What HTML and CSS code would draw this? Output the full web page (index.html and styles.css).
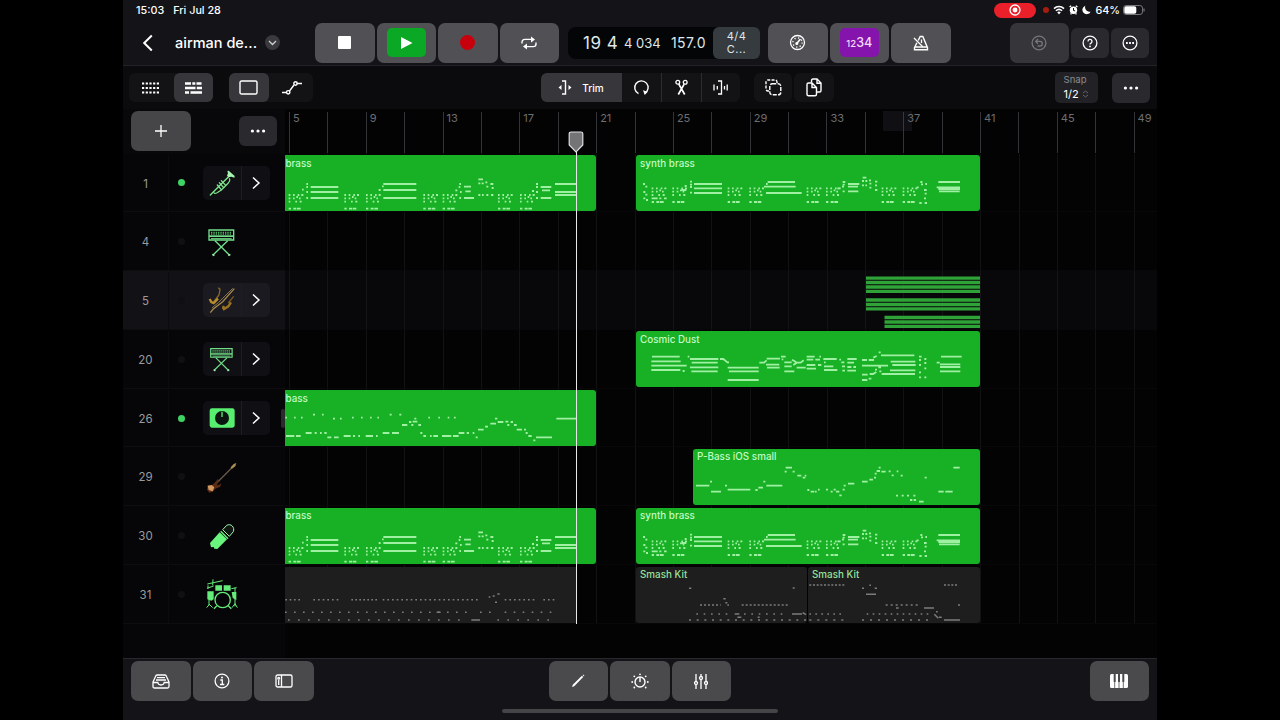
FILE: index.html
```html
<!DOCTYPE html>
<html lang="en">
  <head>
    <title>airman demo</title>
    <meta charset="UTF-8" />
    <link rel="stylesheet" href="styles.css">
  </head>
  <body>
    <svg class="defs">
      <symbol id="keyboard" viewBox="0 0 90 90">
        <path d="M6 9h74v30H6z" fill="none" stroke="#72df88" stroke-width="4" />
        <path d="M6 25h74v5H6z" fill="#72df88" />
        <path d="M12 35h62" stroke="#72df88" stroke-width="3" />
        <path d="M12 16h62M12 21h62" stroke="#4fb263" stroke-width="4" stroke-dasharray="4 3" />
        <path d="M24 41l43 43M62 41L18 84" fill="none" stroke="#72df88" stroke-width="4" />
        <path d="M16 82l6 4M70 82l-6 4" stroke="#a7f0b4" stroke-width="5" />
      </symbol>
      <symbol id="chevron" viewBox="0 0 12 16">
        <path d="M3 2.5l6 5.5-6 5.5" fill="none" stroke="#fff" stroke-width="1.5" />
      </symbol>
      <symbol id="dots" viewBox="0 0 16 6">
        <circle cx="2.4" cy="3" r="1.6" /><circle cx="8" cy="3" r="1.6" /><circle cx="13.6" cy="3" r="1.6" />
      </symbol>
      <g id="cluster">
        <path d="M0 0h5m8 0h5m9 0h5m6 0h6M0 10h5m8 0h5m13 0h5M0 20h5m15 0h5m8 0h6M23 6h5M0 41h7m7 0h9m2 0h11" />
      </g>
      <g id="brass-notes">
        <use href="#cluster" x="26" y="270" /><use href="#cluster" x="193" y="270" />
        <use href="#cluster" x="258" y="270" /><use href="#cluster" x="430" y="270" />
        <use href="#cluster" x="488" y="270" /><use href="#cluster" x="654" y="270" />
        <use href="#cluster" x="720" y="270" />
        <path d="M92 246h83M92 261h83M92 279h83M310 237h99M310 255h99M310 279h99" />
        <path d="M66 254h5M79 237h5M79 246h5M79 261h5M79 279h5M296 255h6M306 244h5" />
        <path d="M526 256h6M538 237h5M536 246h5M540 261h5M538 279h5M552 245h21M556 259h16M552 279h30" />
        <path d="M595 223h14M595 235h6m4 0h6M616 232h6M619 245h6M631 237h9M635 249h6M595 270h6m5 0h5M619 270h6M633 270h7" />
        <path d="M756 258h6M768 237h6M768 246h6M768 261h6M768 279h6M782 246h32M786 256h24M782 279h32M825 237h63M825 261h63M825 270h63" />
      </g>
      <g id="synth-notes">
        <path d="M69 237h6M76 245h6M70 261h6M76 269h6M70 280h6M78 285h6" />
        <use href="#cluster" x="95" y="250" /><use href="#cluster" x="157" y="250" />
        <use href="#cluster" x="323" y="250" /><use href="#cluster" x="388" y="250" />
        <use href="#cluster" x="560" y="250" /><use href="#cluster" x="618" y="250" />
        <use href="#cluster" x="785" y="250" /><use href="#cluster" x="848" y="250" />
        <path d="M95 280h18m5 0h6m8 0h8M184 255h15M194 243h6M210 230h6M210 239h6M210 246h6M210 263h6" />
        <path d="M222 237h84M222 250h84M222 264h84M443 231h82M432 245h95M438 264h107M438 237h5" />
        <path d="M652 250h6M668 231h8M668 239h6M666 245h6M668 259h6M684 237h34M684 245h30M684 259h31" />
        <path d="M728 218h11M726 228h6m4 0h6M726 241h6m4 0h5M747 226h6M748 236h6M748 248h6M765 230h7M765 241h6M765 255h7" />
        <path d="M890 247h6M901 231h6M903 238h6M916 237h5M912 255h8M914 266h6M912 280h6M898 294h7M914 294h7" />
        <path d="M955 231h65M950 247h70M955 252h65M957 259h62" />
      </g>
    </svg>

    <div class="app">
      <header class="status-bar">
        <span class="clock">15:03</span>
        <span class="date">Fri Jul 28</span>
        <div class="status-icons">
          <span class="rec-pill">
            <svg width="12" height="12" viewBox="0 0 12 12"><circle cx="6" cy="6" r="5" fill="none" stroke="#fff" stroke-width="1.3" /><circle cx="6" cy="6" r="2.4" fill="#fff" /></svg>
          </span>
          <span class="mic-dot"></span>
          <svg class="wifi" width="12" height="10" viewBox="0 0 12 10"><path d="M1 3.6a7.2 7.2 0 0 1 10 0M2.9 5.8a4.6 4.6 0 0 1 6.2 0" fill="none" stroke="#fff" stroke-width="1.5" /><path d="M4.2 7.3a2.7 2.7 0 0 1 3.6 0L6 9.4z" fill="#fff" /></svg>
          <svg class="alarm" width="9" height="10" viewBox="0 0 9 10"><circle cx="4.5" cy="5.2" r="3.7" fill="#fff" /><path d="M.6 2L2.2.8M8.4 2L6.8.8M1.6 9.4l.8-1M7.4 9.4l-.8-1" stroke="#fff" stroke-width="1.4" /><path d="M4.5 3v2.5l1.6.4" fill="none" stroke="#131318" /></svg>
          <svg class="moon" width="9" height="10" viewBox="0 0 9 10"><path d="M3.3.8a4.3 4.3 0 1 0 5.3 5.9A4.6 4.6 0 0 1 3.3.8z" fill="#fff" /></svg>
          <span class="charge">64%</span>
          <svg width="22" height="10" viewBox="0 0 22 10"><rect x=".5" y=".5" width="19" height="9" rx="2.6" fill="none" stroke="#77777b" /><rect x="1.3" y="1.3" width="12" height="7.4" rx="1.8" fill="#fff" /><path d="M21 3.4v3.2" stroke="#77777b" stroke-width="1.2" /></svg>
        </div>
      </header>

      <div class="control-bar">
        <svg class="back" width="12" height="18" viewBox="0 0 12 18"><path d="M9.8 1.5L2.2 9l7.6 7.5" fill="none" stroke="#fff" stroke-width="2" /></svg>
        <div class="project-name">airman de...</div>
        <div class="name-menu"><svg width="9" height="6" viewBox="0 0 9 6"><path d="M1 1l3.5 3.5L8 1" fill="none" stroke="#d0d0d3" stroke-width="1.3" /></svg></div>

        <div class="button-row transport">
          <div class="key"><span class="stop"></span></div>
          <div class="key"><span class="play"><svg width="13" height="14" viewBox="0 0 13 14"><path d="M1 1l11.5 6L1 13z" fill="#fff" /></svg></span></div>
          <div class="key"><span class="record"></span></div>
          <div class="key">
            <svg width="18" height="14" viewBox="0 0 18 14"><path d="M2 7.5V6a2.6 2.6 0 0 1 2.6-2.6H12M16 6.5V8a2.6 2.6 0 0 1-2.6 2.6H6" fill="none" stroke="#fff" stroke-width="1.4" /><path d="M11 .4l4 3-4 3zM7 7.6l-4 3 4 3z" fill="#fff" /></svg>
          </div>
        </div>

        <div class="lcd">
          <span class="position">19 4</span>
          <span class="ticks">4 034</span>
          <span class="tempo">157.0</span>
          <div class="signature"><span>4/4</span><span>C...</span></div>
        </div>

        <div class="button-row modes">
          <div class="key">
            <svg width="17" height="17" viewBox="0 0 17 17"><circle cx="8.5" cy="8.5" r="7" fill="none" stroke="#fff" stroke-width="1.3" /><circle cx="8.5" cy="8.5" r="4.6" fill="none" stroke="#fff" stroke-width="1.3" stroke-dasharray="1.2 2.4" /><path d="M7.8 9.5l3.6-4.5" stroke="#fff" stroke-width="1.5" /><circle cx="7.8" cy="9.5" r="1.5" fill="#fff" /></svg>
          </div>
          <div class="key"><span class="count-in"><small>12</small>34</span></div>
          <div class="key">
            <svg width="16" height="16" viewBox="0 0 16 16"><path d="M5.2 5.5l2-4h2.6l4.7 11.2v2H1.5v-2l2.4-5M1.8 12h12.4" fill="none" stroke="#fff" stroke-width="1.4" /><path d="M1 3l9 9M8.5 4.5V8" fill="none" stroke="#fff" stroke-width="1.3" /></svg>
          </div>
        </div>

        <div class="button-row right-keys">
          <div class="key disabled">
            <svg width="16" height="16" viewBox="0 0 16 16"><g fill="none" stroke="#77777b" stroke-width="1.3"><circle cx="8" cy="8" r="6.9" /><path d="M5 6.4h4a2.3 2.3 0 0 1 0 4.6H6.6M7 4L4.7 6.4 7 8.8" /></g></svg>
          </div>
          <div class="small-key">
            <svg width="16" height="16" viewBox="0 0 16 16"><circle cx="8" cy="8" r="6.9" fill="none" stroke="#fff" stroke-width="1.3" /><path d="M6 6.4a2 2 0 1 1 3 1.7c-.8.4-1 .7-1 1.5" fill="none" stroke="#fff" stroke-width="1.3" /><circle cx="8" cy="11.4" r=".9" fill="#fff" /></svg>
          </div>
          <div class="small-key">
            <svg width="16" height="16" viewBox="0 0 16 16"><circle cx="8" cy="8" r="6.9" fill="none" stroke="#fff" stroke-width="1.3" /><path d="M4 8h1.8M7.1 8h1.8M10.2 8H12" stroke="#fff" stroke-width="1.8" /></svg>
          </div>
        </div>
      </div>

      <div class="tool-bar">
        <div class="segment view-switch">
          <div class="seg"><svg width="17" height="12" viewBox="0 0 17 12"><path d="M0 1.5h17M0 6h17M0 10.5h17" stroke="#fff" stroke-width="2.2" stroke-dasharray="2.2 1.5" /></svg></div>
          <div class="seg on"><svg width="17" height="12" viewBox="0 0 17 12"><path d="M0 1.5h6M7.3 1.5h3M11.5 1.5h5M0 6h10.5M11.8 6H17M0 10.5h4M5.5 10.5H17" stroke="#fff" stroke-width="2.6" /></svg></div>
        </div>
        <div class="segment edit-switch">
          <div class="seg on"><svg width="19" height="15" viewBox="0 0 19 15"><rect x="1" y="1" width="17" height="13" rx="1.6" fill="none" stroke="#fff" stroke-width="1.4" /></svg></div>
          <div class="seg"><svg width="20" height="14" viewBox="0 0 20 14"><g fill="none" stroke="#fff" stroke-width="1.4"><path d="M0 11.5h4.5M7.5 10L12 4M14.5 2.500H20" /><circle cx="6.2" cy="11.3" r="1.7" /><circle cx="13.5" cy="2.5" r="1.7" /></g></svg></div>
        </div>

        <div class="segment tools">
          <div class="seg on trim">
            <svg width="14" height="15" viewBox="0 0 14 15"><path d="M4 1h3.5v13H4" fill="none" stroke="#fff" stroke-width="1.4" /><path d="M3.5 5v5L.5 7.5zM10.5 5v5l3-2.5z" fill="#fff" /></svg>
            <span>Trim</span>
          </div>
          <div class="seg"><svg width="17" height="17" viewBox="0 0 17 17"><path d="M5.5 14.6a6.700 6.700 0 1 1 6.200-.2" fill="none" stroke="#fff" stroke-width="1.4" /><path d="M10 11.3l4.700 1.500-3 3.300z" fill="#fff" /></svg></div>
          <div class="seg"><svg width="13" height="17" viewBox="0 0 13 17"><g fill="none" stroke="#fff" stroke-width="1.3"><circle cx="2.8" cy="3.3" r="1.9" /><circle cx="10.2" cy="3.3" r="1.9" /><path d="M3.8 5.2l5.900 10.300M9.200 5.200L3.300 15.500" stroke-width="1.7" /></g></svg></div>
          <div class="seg"><svg width="15" height="15" viewBox="0 0 15 15"><g fill="none" stroke="#fff" stroke-width="1.3"><path d="M5 1h3.500v13H5M1 4.500v6M4.300 6v3.500M11.500 6v3.500M14.200 4.500v6" /></g></svg></div>
        </div>
        <div class="tool copy"><svg width="17" height="17" viewBox="0 0 17 17"><rect x="4.8" y="4.8" width="11" height="11" rx="2.5" fill="none" stroke="#fff" stroke-width="1.4" stroke-dasharray="4 1.3" /><path d="M4 12H3a2 2 0 0 1-2-2V3a2 2 0 0 1 2-2h7a2 2 0 0 1 2 2v1" fill="none" stroke="#fff" stroke-width="1.4" stroke-dasharray="3 1.3" /></svg></div>
        <div class="tool"><svg width="16" height="19" viewBox="0 0 16 19"><g fill="none" stroke="#fff" stroke-width="1.4"><path d="M5.5 4.500V2.700C5.500 1.700 6 1 7 1h4l4 4v7.500c0 1-.5 1.500-1.500 1.500H11M11 1v4.300h4" /><path d="M2.500 5H6l4.500 4.500v6.700c0 1-.6 1.500-1.500 1.500H2.500c-1 0-1.500-.6-1.500-1.500V6.500C1 5.500 1.500 5 2.500 5zM6 5v4.500h4.500" /></g></svg></div>

        <div class="snap">
          <span class="snap-label">Snap</span>
          <span class="snap-value">1/2 <svg width="7" height="8" viewBox="0 0 7 8"><path d="M1 3l2.500-2L6 3M1 5l2.500 2L6 5" fill="none" stroke="#66666a" /></svg></span>
        </div>
        <div class="small-key"><svg class="dots" width="16" height="6"><use href="#dots" /></svg></div>
      </div>

      <main class="workspace">
        <aside class="tracks">
          <div class="tracks-head">
            <div class="key"><svg width="12" height="12" viewBox="0 0 12 12"><path d="M6 0v12M0 6h12" stroke="#fff" stroke-width="1.3" /></svg></div>
            <div class="small-key"><svg class="dots" width="16" height="6"><use href="#dots" /></svg></div>
          </div>

          <div class="track">
            <span class="num">1</span><span class="led lit"></span>
            <div class="instrument stack">
              <span class="icon"><svg width="30" height="30" viewBox="0 0 90 90"><g fill="none" stroke="#7fe88d" stroke-linecap="round"><path d="M10 81l8-8M18 73l52-52" stroke-width="4" /><path d="M20 71q0 7 9 4l14-9 21-21q7-9 3-13" stroke-width="3.5" /><path d="M31 51l12 14M37 44l13 15M43 38l13 14" stroke-width="4" /></g><path d="M61 9l4-1 18 16-1 5-9-3-8 2-5-5 3-7z" fill="#a9f2b0" /></svg></span>
              <span class="open"><svg width="12" height="16"><use href="#chevron" /></svg></span>
            </div>
          </div>
          <div class="track">
            <span class="num">4</span><span class="led"></span>
            <div class="instrument"><span class="icon"><svg width="30" height="30"><use href="#keyboard" /></svg></span></div>
          </div>
          <div class="track selected">
            <span class="num">5</span><span class="led"></span>
            <div class="instrument stack">
              <span class="icon"><svg width="30" height="30" viewBox="0 0 90 90"><g fill="none"><path d="M34 8l5 5-3 17-16 21" stroke="#8a6a26" stroke-width="4" /><path d="M8 42l5 9 7 3 13-13" stroke="#b98d2e" stroke-width="7" /><path d="M82 11L47 50 18 73l-8 10" stroke="#a5894e" stroke-width="4" /><path d="M77 10L35 52 15 69" stroke="#88764d" stroke-width="3" /><path d="M80 34L64 54" stroke="#7d5c1d" stroke-width="4" /><path d="M72 52l-8 12-16 10M50 62l-2 10" stroke="#9c7324" stroke-width="7" /></g></svg></span>
              <span class="open"><svg width="12" height="16"><use href="#chevron" /></svg></span>
            </div>
          </div>
          <div class="track">
            <span class="num">20</span><span class="led"></span>
            <div class="instrument stack">
              <span class="icon"><svg width="26" height="26"><use href="#keyboard" /></svg></span>
              <span class="open"><svg width="12" height="16"><use href="#chevron" /></svg></span>
            </div>
          </div>
          <div class="track">
            <span class="num">26</span><span class="led lit"></span>
            <div class="instrument stack">
              <span class="icon"><svg width="30" height="30" viewBox="0 0 90 90"><rect x="8" y="16" width="75" height="58" rx="7" fill="#58ee70" /><circle cx="45" cy="45" r="21" fill="#0d1510" /><path d="M45 26v16" stroke="#58ee70" stroke-width="4" /></svg></span>
              <span class="open"><svg width="12" height="16"><use href="#chevron" /></svg></span>
            </div>
            <span class="grip"></span>
          </div>
          <div class="track">
            <span class="num">29</span><span class="led"></span>
            <div class="instrument"><span class="icon"><svg width="32" height="32" viewBox="0 0 96 96"><path d="M21 77L82 16" stroke="#68594b" stroke-width="4" /><path d="M74 19l9-10 8-3-3 10-11 8z" fill="#a88b55" /><path d="M5 73l11 1 12-11 8-10 2 8-6 9 5 3 10-6-5 11-14 5-7 9-11 3-7-9z" fill="#5a2b12" /><path d="M5 74l12-2 8 7-5 12-12-4z" fill="#d49a63" /></svg></span></div>
          </div>
          <div class="track">
            <span class="num">30</span><span class="led"></span>
            <div class="instrument"><span class="icon"><svg width="30" height="30" viewBox="0 0 90 90"><path d="M9 66l29-32 22 21-29 29-9-1-2-5-8 1z" fill="#69f47e" /><path d="M41 31l22 22" stroke="#69f47e" stroke-width="4" /><path d="M47 26l12-13c13-7 25 6 20 19L67 46z" fill="#101712" stroke="#a4f5af" stroke-width="3" /></svg></span></div>
          </div>
          <div class="track">
            <span class="num">31</span><span class="led"></span>
            <div class="instrument"><span class="icon"><svg width="32" height="32" viewBox="0 0 96 96"><g stroke="#64ec79" fill="none"><path d="M4 18l46-10M6 22v10M3 31l20-7M21 4l-1 18M76 32l16-3M87 29v56M9 47v35M2 89l8-10 10 10M78 89l9-12 7 12" stroke-width="3" /><circle cx="50" cy="66" r="23" stroke-width="4" /><path d="M32 84l-8 8M67 84l9 8" stroke-width="4" /></g><path d="M4 40h19v24l-7 4-12-4zM28 22h20v16H28zM53 22h21v16H53zM77 42h14v24l-11-6z" fill="#64ec79" /></svg></span></div>
          </div>
        </aside>

        <section class="timeline">
          <div class="ruler">
            <span>5</span><span></span><span>9</span><span></span><span>13</span><span></span>
            <span>17</span><span></span><span>21</span><span></span><span>25</span><span></span>
            <span>29</span><span></span><span>33</span><span></span><span>37</span><span></span>
            <span>41</span><span></span><span>45</span><span></span><span>49</span>
            <i class="loop-range"></i>
          </div>

          <div class="lanes">
            <div class="lane">
              <div class="region early">brass<svg viewBox="15 150 933 168"><use href="#brass-notes" /></svg></div>
              <div class="region late">synth brass<svg viewBox="48 150 1032 168"><use href="#synth-notes" /></svg></div>
            </div>
            <div class="lane"></div>
            <div class="lane selected">
              <svg class="held-notes" width="114" height="53" viewBox="0 0 114 53">
                <path d="M0 2.200h114M0 6.500h114M0 11h114M0 15.300h114M0 24h114M0 28.500h114M0 32.800h114M18.500 41.500h95.500M18.500 46h95.500M18.500 50.300h95.500" stroke="#2fa338" stroke-width="3.300" />
              </svg>
            </div>
            <div class="lane">
              <div class="region late">Cosmic Dust<svg viewBox="18 184 1032 168">
                <path d="M66 261h83M64 275h88M64 288h106M64 301h87M158 304h6M173 261h5M180 268h85M185 279h78M180 293h85M184 305h79M270 268h10l6 5 6 5h5" />
                <path d="M293 294h93M297 305h89M293 331h93M388 279h14l8-7M410 267h40M408 285h40M411 294h38M453 261h14M455 269h5M463 278h22M486 270l8 5 7 5M490 286l10-7h12l9-7M463 290h22M463 305h30M500 294h27" />
                <path d="M530 261h24M568 261h5M530 270h20m6 0h14M530 286h26m8 0h10M530 297h28M580 268h40M582 278h5M582 290h28M582 301h40M628 270h5M634 278h9M636 290h9M637 303h8M652 268h28M652 279h20M652 292h12m6 0h8M652 303h26" />
                <path d="M696 271h15m5 0h16M730 264l10-5M746 248h6M753 257h100M696 288h78M782 276h74M787 286h70M780 302h76M745 293h8M735 300h6M748 305h6M696 315h17m6 -2h10l10-6M755 313h100M696 331h16M716 327h8" />
                <path d="M867 261h8M867 271h6M883 268h6M867 286h6M883 280h6M883 296h6M867 308h6M867 323h6M883 323h6M933 261h62M920 279h9M930 284h61M930 292h61M930 305h61" />
              </svg></div>
            </div>
            <div class="lane">
              <div class="region early">bass<svg viewBox="15 16 933 168">
                <path d="M16 99h5M42 99h5M63 99h5M99 90h6M126 90h5M159 102h6M180 102h5M216 99h5M243 99h5M270 99h5M292 99h5M329 90h6M358 90h6M445 99h5M475 99h5M503 99h5M522 99h5" />
                <path d="M18 154h25m5 0h14M77 145h18M104 145h6M120 145h5M133 145h7M142 158h12M162 158h14M191 154h21M219 154h6M235 154h5M257 154h22M288 154h5M308 145h20m8 0h21M366 121h16M387 112h7M398 111h14M403 102h6M394 121h6M415 121h8M421 145h6M430 154h8M450 154h5m5 0h14M486 154h28m5 0h17M536 145h17M560 145h7M578 145h5M587 158h6M594 135h17M615 126h9M631 117h17M645 102h7M653 112h17M676 111h9M682 121h6M692 112h7M702 121h8M710 135h16M732 135h6M737 145h6M745 154h10M760 167h6M768 158h48M829 102h61" />
              </svg></div>
            </div>
            <div class="lane">
              <div class="region pbass">P-Bass iOS small<svg viewBox="219 13 861 168">
                <path d="M228 123h40M270 111h6M273 141h30M315 123h6M323 135h68M406 136h7M415 129h14M430 111h6M439 123h48M497 69h19M494 81h6M518 81h6M532 93h12M548 99h8M554 93h5M562 136h6M572 141h10M584 141h6M594 135h5M618 135h6M632 141h6M641 135h6M648 141h10M658 152h7M668 135h6M671 123h6M684 117h19M726 111h17M748 105h11M762 99h6M764 87h6M770 79h10M776 69h6M784 81h13M806 80h6M815 92h6M830 80h5M842 93h6M914 99h6M1000 69h19" />
                <path d="M828 153h6M845 153h6M861 153h6M880 153h6M870 166h7M881 166h7M897 171h14M955 141h16m5 0h22" />
              </svg></div>
            </div>
            <div class="lane">
              <div class="region early">brass<svg viewBox="15 150 933 168"><use href="#brass-notes" /></svg></div>
              <div class="region late">synth brass<svg viewBox="48 150 1032 168"><use href="#synth-notes" /></svg></div>
            </div>
            <div class="lane">
              <div class="region muted drums"><svg viewBox="15 200 876 168">
                <path d="M16 298h45" stroke-dasharray="5 8" /><path d="M100 298h80" stroke-dasharray="5 9" /><path d="M214 298h80" stroke-dasharray="5 7" /><path d="M308 298h290" stroke-dasharray="5 9" /><path d="M674 298h94M790 298h40" stroke-dasharray="5 9" />
                <path d="M15 336h562M600 336h38M674 336h156" stroke-dasharray="5 22" /><path d="M24 359h540M652 359h180" stroke-dasharray="5 25" />
                <path d="M626 290h5M638 287h6M652 281h7M645 306h6M470 336h12M574 359h26" />
              </svg></div>
              <div class="region muted kit-one">Smash Kit<svg viewBox="48 366 513 168">
                <path d="M207 430h7M518 429h6M310 461h7M316 473h6M322 480h5M344 507h14M352 517h12M516 507h30M548 503l10 6M413 517h6" />
                <path d="M240 480h62M365 480h140" stroke-dasharray="6 6" /><path d="M229 507h105M372 507h130" stroke-dasharray="5 17" /><path d="M207 525h354" stroke-dasharray="6 17" />
              </svg></div>
              <div class="region muted kit-two">Smash Kit<svg viewBox="564 366 516 168">
                <path d="M568 420h108M972 420h40" stroke-dasharray="6 5" />
                <path d="M726 430h6M748 421h5M764 430h7M738 448h30M828 489h8M912 489h30M948 500h5M943 508l12 12M1014 480h6M972 525h48M957 517h8" />
                <path d="M797 480h104" stroke-dasharray="6 9" /><path d="M568 507h107M740 507h190" stroke-dasharray="5 13" /><path d="M568 525h108M726 525h204" stroke-dasharray="6 18" />
              </svg></div>
            </div>
          </div>
          <div class="playhead"><svg width="16" height="23" viewBox="0 0 16 23"><path d="M3 1h10a1.800 1.800 0 0 1 1.800 1.800V14L8 21 1.200 14V2.800A1.800 1.800 0 0 1 3 1z" fill="#747476" stroke="#dedee0" stroke-width="1.2" /></svg></div>
        </section>
      </main>

      <footer class="bottom-bar">
        <div class="button-row">
          <div class="key"><svg width="18" height="15" viewBox="0 0 18 15"><g fill="none" stroke="#fff" stroke-width="1.3"><path d="M1 8l2.500-5.500C3.800 1.500 4.300 1 5 1h8c.7 0 1.200.5 1.500 1.500L17 8v4.500c0 1-.5 1.500-1.500 1.500h-13C1.500 14 1 13.500 1 12.500zM1 8.500h4.800c.3 2 1.500 2.500 3.200 2.500s2.900-.5 3.200-2.500H17M5 3.700h8M4 6h10" /></g></svg></div>
          <div class="key"><svg width="16" height="16" viewBox="0 0 16 16"><circle cx="8" cy="8" r="6.9" fill="none" stroke="#fff" stroke-width="1.3" /><path d="M6.3 7h2v4.300M6 11.500h4.300" fill="none" stroke="#fff" stroke-width="1.3" /><circle cx="8" cy="4.5" r="1" fill="#fff" /></svg></div>
          <div class="key"><svg width="18" height="14" viewBox="0 0 18 14"><g fill="none" stroke="#fff" stroke-width="1.3"><rect x="1" y="1" width="16" height="12" rx="1.6" /><path d="M6.5 1v12M3.700 6v5" /><circle cx="3.7" cy="4.3" r=".9" /></g></svg></div>
        </div>
        <div class="button-row editors">
          <div class="key"><svg width="14" height="14" viewBox="0 0 14 14"><path d="M1 13l.8-2.200L10.900 1.800l1.300 1.300L3.200 12.200zM11.600 1.100l.6-.5 1.200 1.200-.5.600z" fill="#fff" /></svg></div>
          <div class="key"><svg width="18" height="16" viewBox="0 0 18 16"><circle cx="9" cy="9" r="5" fill="none" stroke="#fff" stroke-width="1.4" /><path d="M9 4v5" stroke="#fff" stroke-width="1.4" /><g fill="#fff"><circle cx="9" cy="1.3" r=".9" /><circle cx="3.3" cy="3.3" r=".9" /><circle cx="14.7" cy="3.3" r=".9" /><circle cx="1.2" cy="9" r=".9" /><circle cx="16.8" cy="9" r=".9" /><circle cx="3.3" cy="14.5" r=".9" /><circle cx="14.7" cy="14.5" r=".9" /></g></svg></div>
          <div class="key"><svg width="14" height="15" viewBox="0 0 14 15"><g fill="none" stroke="#fff" stroke-width="1.3"><path d="M2 0v7.500M2 10.500V15M7 0v2.500M7 5.500V15M12 0v7.500M12 10.500V15" /><circle cx="2" cy="9" r="1.5" /><circle cx="7" cy="4" r="1.5" /><circle cx="12" cy="9" r="1.5" /></g></svg></div>
        </div>
        <div class="key piano"><svg width="18" height="14" viewBox="0 0 18 14"><rect width="18" height="14" rx="1.5" fill="#fff" /><path d="M4.7 0v8M9 0v8M13.300 0v8" stroke="#4a4a4d" stroke-width="2" /><path d="M4.7 8v6M9 8v6M13.300 8v6" stroke="#4a4a4d" stroke-width=".8" /></svg></div>
        <div class="home-indicator"></div>
      </footer>
    </div>
  </body>
</html>
```

FILE: styles.css
```css
* {
  box-sizing: border-box;
}

body {
  margin: 0;
  background: #000;
  color: #fff;
  font-family: Inter, "Liberation Sans", sans-serif;
}

svg {
  display: block;
  flex: none;
}

.defs {
  position: absolute;
  width: 0;
  height: 0;
}

.app {
  width: 1034px;
  height: 720px;
  margin: 0 auto 0 123px;
  display: flex;
  flex-direction: column;
  overflow: hidden;
  background: #131318;
}

/* status bar */

.status-bar {
  height: 20px;
  display: flex;
  align-items: center;
  padding: 0 12px 0 13px;
  font-size: 10.8px;
  font-weight: 500;
}

.date {
  margin-left: 9px;
}

.status-icons {
  margin-left: auto;
  display: flex;
  align-items: center;
}

.rec-pill {
  width: 42px;
  height: 15px;
  border-radius: 8px;
  background: #e9202a;
  display: flex;
  align-items: center;
  justify-content: center;
}

.mic-dot {
  width: 6px;
  height: 6px;
  margin: 0 4px 0 7px;
  border-radius: 50%;
  background: #a51d10;
}

.alarm {
  margin: 0 4px;
}

.charge {
  margin: 0 3px 0 4px;
}

/* transport */

.control-bar {
  height: 46px;
  display: flex;
  align-items: center;
  padding: 0 7px 0 19px;
  border-bottom: 1px solid #232327;
}

.project-name {
  width: 82px;
  margin-left: 21px;
  font-size: 14.5px;
  font-weight: 500;
  white-space: nowrap;
}

.name-menu {
  width: 15px;
  height: 15px;
  margin-left: 8px;
  border-radius: 50%;
  background: #3a3a3e;
  display: flex;
  align-items: center;
  justify-content: center;
}

.button-row {
  display: flex;
  align-items: center;
  gap: 2px;
}

.key {
  width: 59.5px;
  height: 40px;
  flex: none;
  border-radius: 7px;
  background: #515155;
  display: flex;
  align-items: center;
  justify-content: center;
}

.small-key {
  width: 38px;
  height: 30px;
  flex: none;
  border-radius: 6px;
  background: #29292e;
  display: flex;
  align-items: center;
  justify-content: center;
}

.disabled {
  background: #35353a;
}

.transport {
  margin-left: 35px;
}

.stop {
  width: 13px;
  height: 13px;
  border-radius: 1px;
  background: #fff;
}

.play {
  width: 39px;
  height: 29px;
  border-radius: 5px;
  background: #0aa824;
  display: flex;
  align-items: center;
  justify-content: center;
}

.record {
  width: 15px;
  height: 15px;
  border-radius: 50%;
  background: #c8000e;
}

.lcd {
  width: 192px;
  height: 32px;
  margin-left: 9px;
  padding-left: 15px;
  border-radius: 8px;
  background: #030507;
  color: #dfe8ea;
  display: flex;
  align-items: center;
  white-space: nowrap;
}

.position {
  width: 41px;
  font-size: 17px;
  letter-spacing: 0.5px;
}

.ticks {
  width: 47px;
  font-size: 13px;
}

.tempo {
  width: 42px;
  font-size: 14px;
  letter-spacing: 0.4px;
}

.signature {
  width: 47px;
  height: 32px;
  border-radius: 6px;
  background: #353b3f;
  display: flex;
  flex-direction: column;
  align-items: center;
  justify-content: center;
  font-size: 11px;
  line-height: 13px;
  letter-spacing: 0.5px;
}

.modes {
  margin-left: 8px;
}

.count-in {
  width: 39px;
  height: 29px;
  border-radius: 5px;
  background: #8514ad;
  color: #f3dcfa;
  text-align: center;
  font-size: 12.5px;
  font-weight: 500;
  line-height: 29px;
}

.count-in small {
  font-size: 9.5px;
}

.right-keys {
  margin-left: auto;
  padding-right: 1px;
}

/* tools */

.tool-bar {
  height: 43px;
  display: flex;
  align-items: center;
  padding: 0 7.5px 0 6px;
  background: #0b0b0d;
}

.segment {
  display: flex;
  border-radius: 6px;
  background: #131316;
}

.view-switch {
  gap: 3px;
  padding-left: 2px;
}

.edit-switch {
  gap: 4px;
  margin-left: 16px;
  padding-right: 1px;
}

.seg,
.tool {
  width: 39.5px;
  height: 29px;
  display: flex;
  align-items: center;
  justify-content: center;
}

.on {
  border-radius: 6px;
  background: #37373b;
}

.tools {
  margin-left: 227.5px;
}

.tools .seg + .seg + .seg {
  border-left: 1px solid #2c2c30;
}

.tools .trim {
  width: 81px;
  gap: 10px;
  border-radius: 6px 0 0 6px;
  font-size: 10px;
  font-weight: 500;
}

.tool {
  border-radius: 6px;
  background: #131316;
}

.copy {
  width: 38px;
  margin: 0 2px 0 14px;
}

.snap {
  width: 43px;
  height: 31px;
  margin: 0 14px 0 auto;
  padding: 1px 0 0 9px;
  border-radius: 5px;
  background: #222226;
  font-size: 9.6px;
  line-height: 14px;
}

.snap-label {
  display: block;
  color: #8b8b8f;
}

.snap-value {
  display: flex;
  align-items: center;
  gap: 3px;
  font-size: 11px;
  white-space: nowrap;
}

.dots {
  fill: #fff;
}

/* workspace */

.workspace {
  height: 549px;
  display: flex;
  background: #030304;
}

.tracks {
  width: 162px;
  flex: none;
  background: #060609;
}

.tracks-head {
  height: 44.5px;
  padding: 0 8px;
  display: flex;
  align-items: center;
  justify-content: space-between;
  background: #08080b;
}

.tracks-head .key {
  background: #464649;
}

.track {
  position: relative;
  height: 58.8px;
  padding-top: 1px;
  display: flex;
  align-items: center;
  border-bottom: 1px solid #0d0d10;
}

.track.selected {
  background: #111116;
}

.num {
  width: 46px;
  height: 100%;
  border-right: 1px solid #0c0c0f;
  color: #9a9a9d;
  font-size: 11.5px;
  line-height: 58px;
  text-align: center;
}

.led {
  width: 7px;
  height: 7px;
  margin-left: 9px;
  border-radius: 50%;
  background: #101013;
}

.lit {
  background: #3ed363;
}

.instrument {
  width: 67px;
  height: 34px;
  margin-left: 17.5px;
  border-radius: 5px;
  display: flex;
}

.stack {
  background: #101014;
}

.selected .stack {
  background: #1a1a20;
}

.icon {
  width: 38px;
  display: flex;
  align-items: center;
  justify-content: center;
}

.open {
  width: 29px;
  border-left: 1px solid #1d1d22;
  display: flex;
  align-items: center;
  justify-content: center;
}

.grip {
  position: absolute;
  right: 0;
  top: 20px;
  width: 4px;
  height: 19px;
  border-radius: 2px;
  background: #2b2b2e;
}

.timeline {
  position: relative;
  width: 872px;
  overflow: hidden;
}

.ruler {
  position: relative;
  height: 44.5px;
  padding: 3px 0 1px 4px;
  display: flex;
  overflow: hidden;
}

.ruler span {
  width: 38.4px;
  flex: none;
  padding-left: 3px;
  border-left: 1px solid #343438;
  color: #6e6e72;
  font-size: 11px;
  line-height: 13px;
}

.loop-range {
  position: absolute;
  left: 598px;
  top: 2px;
  width: 29px;
  height: 20px;
  background: rgba(70, 70, 85, 0.2);
}

.lanes {
  background: repeating-linear-gradient(90deg, #121214 0, #121214 1px, transparent 1px, transparent 38.4px) 4px 0 no-repeat;
}

.lane {
  height: 58.8px;
  padding-top: 1.5px;
  display: flex;
  align-items: flex-start;
  border-bottom: 1px solid #08080a;
}

.lane.selected {
  background: rgba(30, 30, 36, 0.2);
}

.region {
  position: relative;
  height: 56px;
  padding: 1.5px 4px 0;
  border-radius: 3px;
  overflow: hidden;
  background: #18b025;
  color: #c3fac4;
  font-size: 9.8px;
  font-weight: 500;
  line-height: 14px;
  letter-spacing: 0.03px;
}

/* note preview covers the whole region */
.region svg {
  position: absolute;
  left: 0;
  top: 0;
  width: 100%;
  height: 100%;
  fill: none;
  stroke: #a0f0a3;
  stroke-width: 5.5;
}

.early {
  width: 311px;
  margin-right: 40px;
  padding-left: 0.5px;
  border-radius: 0 3px 3px 0;
}

.late {
  width: 344px;
}

.late:first-child {
  margin-left: 351px;
}

.pbass {
  width: 287px;
  margin-left: 408px;
}

.region.muted {
  background: #1e1e1f;
  color: #97e39b;
}

.region.muted svg {
  stroke: #7c7c7e;
  stroke-width: 4.5;
}

.drums {
  width: 292px;
  margin-right: 59px;
  border-radius: 0;
}

.kit-one {
  width: 171px;
  margin-right: 1px;
}

.kit-two {
  width: 172px;
}

.held-notes {
  margin: 3.5px 0 0 581px;
}

.playhead {
  position: absolute;
  left: 283px;
  top: 22px;
  width: 16px;
  height: 493px;
  background: linear-gradient(#e8e8e8, #e8e8e8) 8px 20px / 1px 100% no-repeat;
}

/* bottom bar */

.bottom-bar {
  position: relative;
  height: 62px;
  padding: 2px 8px 0;
  display: flex;
  align-items: flex-start;
  border-top: 1px solid #29292d;
}

.bottom-bar .key {
  background: #4a4a4d;
}

.editors {
  margin-left: 235px;
}

.bottom-bar .piano {
  margin-left: auto;
}

.home-indicator {
  position: absolute;
  left: 379px;
  bottom: 7px;
  width: 276px;
  height: 4px;
  border-radius: 2px;
  background: #454548;
}
```
